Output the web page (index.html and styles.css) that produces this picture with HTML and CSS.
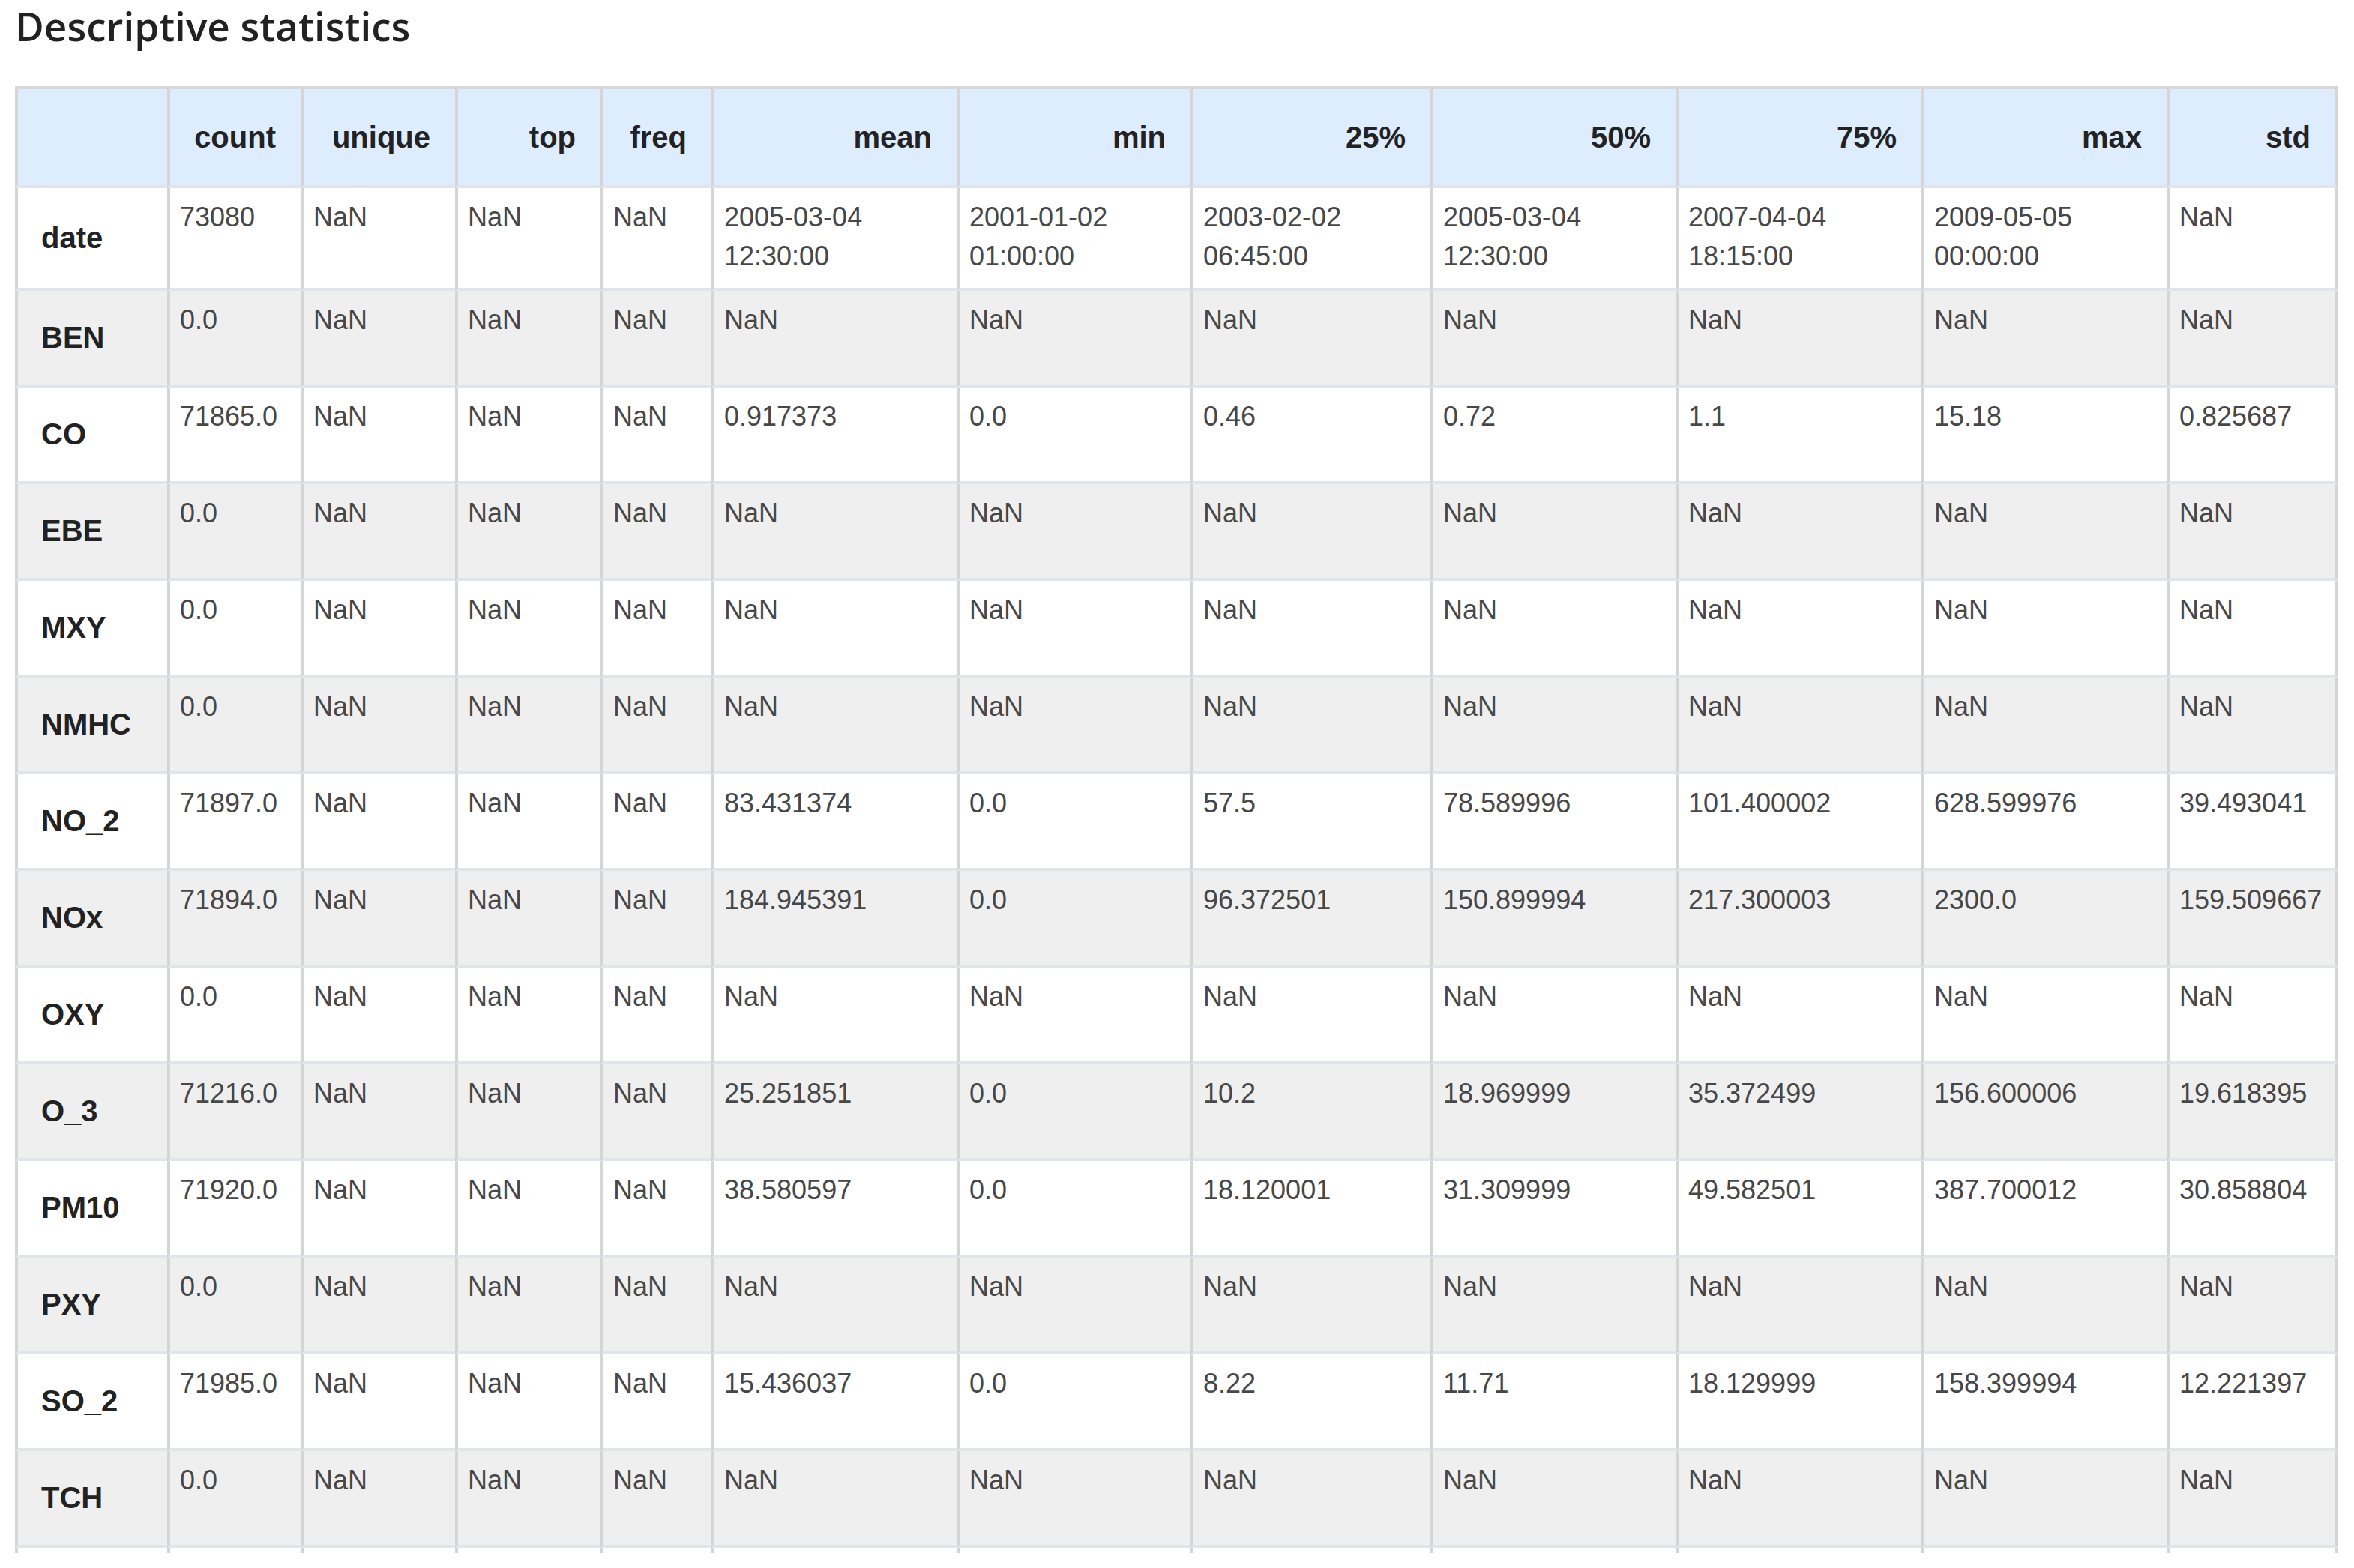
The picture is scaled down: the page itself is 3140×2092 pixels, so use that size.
FILE: index.html
```html
<!DOCTYPE html>
<html lang="en">
<head>
<meta charset="utf-8">
<title>Descriptive statistics</title>
<link rel="stylesheet" href="styles.css">
</head>
<body>
<main class="page">
  <h2 class="title">Descriptive statistics</h2>
  <div class="frame">
    <div class="grid" role="table">
      <div class="row head" role="row">
        <div class="cell corner"></div>
        <div class="cell th">count</div>
        <div class="cell th">unique</div>
        <div class="cell th">top</div>
        <div class="cell th">freq</div>
        <div class="cell th">mean</div>
        <div class="cell th">min</div>
        <div class="cell th">25%</div>
        <div class="cell th">50%</div>
        <div class="cell th">75%</div>
        <div class="cell th">max</div>
        <div class="cell th last">std</div>
      </div>
      <div class="row odd tall" role="row">
        <div class="cell lbl">date</div>
        <div class="cell val">73080</div>
        <div class="cell val">NaN</div>
        <div class="cell val">NaN</div>
        <div class="cell val">NaN</div>
        <div class="cell val">2005-03-04<br>12:30:00</div>
        <div class="cell val">2001-01-02<br>01:00:00</div>
        <div class="cell val">2003-02-02<br>06:45:00</div>
        <div class="cell val">2005-03-04<br>12:30:00</div>
        <div class="cell val">2007-04-04<br>18:15:00</div>
        <div class="cell val">2009-05-05<br>00:00:00</div>
        <div class="cell val last">NaN</div>
      </div>
      <div class="row even" role="row">
        <div class="cell lbl">BEN</div>
        <div class="cell val">0.0</div>
        <div class="cell val">NaN</div>
        <div class="cell val">NaN</div>
        <div class="cell val">NaN</div>
        <div class="cell val">NaN</div>
        <div class="cell val">NaN</div>
        <div class="cell val">NaN</div>
        <div class="cell val">NaN</div>
        <div class="cell val">NaN</div>
        <div class="cell val">NaN</div>
        <div class="cell val last">NaN</div>
      </div>
      <div class="row odd" role="row">
        <div class="cell lbl">CO</div>
        <div class="cell val">71865.0</div>
        <div class="cell val">NaN</div>
        <div class="cell val">NaN</div>
        <div class="cell val">NaN</div>
        <div class="cell val">0.917373</div>
        <div class="cell val">0.0</div>
        <div class="cell val">0.46</div>
        <div class="cell val">0.72</div>
        <div class="cell val">1.1</div>
        <div class="cell val">15.18</div>
        <div class="cell val last">0.825687</div>
      </div>
      <div class="row even" role="row">
        <div class="cell lbl">EBE</div>
        <div class="cell val">0.0</div>
        <div class="cell val">NaN</div>
        <div class="cell val">NaN</div>
        <div class="cell val">NaN</div>
        <div class="cell val">NaN</div>
        <div class="cell val">NaN</div>
        <div class="cell val">NaN</div>
        <div class="cell val">NaN</div>
        <div class="cell val">NaN</div>
        <div class="cell val">NaN</div>
        <div class="cell val last">NaN</div>
      </div>
      <div class="row odd" role="row">
        <div class="cell lbl">MXY</div>
        <div class="cell val">0.0</div>
        <div class="cell val">NaN</div>
        <div class="cell val">NaN</div>
        <div class="cell val">NaN</div>
        <div class="cell val">NaN</div>
        <div class="cell val">NaN</div>
        <div class="cell val">NaN</div>
        <div class="cell val">NaN</div>
        <div class="cell val">NaN</div>
        <div class="cell val">NaN</div>
        <div class="cell val last">NaN</div>
      </div>
      <div class="row even" role="row">
        <div class="cell lbl">NMHC</div>
        <div class="cell val">0.0</div>
        <div class="cell val">NaN</div>
        <div class="cell val">NaN</div>
        <div class="cell val">NaN</div>
        <div class="cell val">NaN</div>
        <div class="cell val">NaN</div>
        <div class="cell val">NaN</div>
        <div class="cell val">NaN</div>
        <div class="cell val">NaN</div>
        <div class="cell val">NaN</div>
        <div class="cell val last">NaN</div>
      </div>
      <div class="row odd" role="row">
        <div class="cell lbl">NO_2</div>
        <div class="cell val">71897.0</div>
        <div class="cell val">NaN</div>
        <div class="cell val">NaN</div>
        <div class="cell val">NaN</div>
        <div class="cell val">83.431374</div>
        <div class="cell val">0.0</div>
        <div class="cell val">57.5</div>
        <div class="cell val">78.589996</div>
        <div class="cell val">101.400002</div>
        <div class="cell val">628.599976</div>
        <div class="cell val last">39.493041</div>
      </div>
      <div class="row even" role="row">
        <div class="cell lbl">NOx</div>
        <div class="cell val">71894.0</div>
        <div class="cell val">NaN</div>
        <div class="cell val">NaN</div>
        <div class="cell val">NaN</div>
        <div class="cell val">184.945391</div>
        <div class="cell val">0.0</div>
        <div class="cell val">96.372501</div>
        <div class="cell val">150.899994</div>
        <div class="cell val">217.300003</div>
        <div class="cell val">2300.0</div>
        <div class="cell val last">159.509667</div>
      </div>
      <div class="row odd" role="row">
        <div class="cell lbl">OXY</div>
        <div class="cell val">0.0</div>
        <div class="cell val">NaN</div>
        <div class="cell val">NaN</div>
        <div class="cell val">NaN</div>
        <div class="cell val">NaN</div>
        <div class="cell val">NaN</div>
        <div class="cell val">NaN</div>
        <div class="cell val">NaN</div>
        <div class="cell val">NaN</div>
        <div class="cell val">NaN</div>
        <div class="cell val last">NaN</div>
      </div>
      <div class="row even" role="row">
        <div class="cell lbl">O_3</div>
        <div class="cell val">71216.0</div>
        <div class="cell val">NaN</div>
        <div class="cell val">NaN</div>
        <div class="cell val">NaN</div>
        <div class="cell val">25.251851</div>
        <div class="cell val">0.0</div>
        <div class="cell val">10.2</div>
        <div class="cell val">18.969999</div>
        <div class="cell val">35.372499</div>
        <div class="cell val">156.600006</div>
        <div class="cell val last">19.618395</div>
      </div>
      <div class="row odd" role="row">
        <div class="cell lbl">PM10</div>
        <div class="cell val">71920.0</div>
        <div class="cell val">NaN</div>
        <div class="cell val">NaN</div>
        <div class="cell val">NaN</div>
        <div class="cell val">38.580597</div>
        <div class="cell val">0.0</div>
        <div class="cell val">18.120001</div>
        <div class="cell val">31.309999</div>
        <div class="cell val">49.582501</div>
        <div class="cell val">387.700012</div>
        <div class="cell val last">30.858804</div>
      </div>
      <div class="row even" role="row">
        <div class="cell lbl">PXY</div>
        <div class="cell val">0.0</div>
        <div class="cell val">NaN</div>
        <div class="cell val">NaN</div>
        <div class="cell val">NaN</div>
        <div class="cell val">NaN</div>
        <div class="cell val">NaN</div>
        <div class="cell val">NaN</div>
        <div class="cell val">NaN</div>
        <div class="cell val">NaN</div>
        <div class="cell val">NaN</div>
        <div class="cell val last">NaN</div>
      </div>
      <div class="row odd" role="row">
        <div class="cell lbl">SO_2</div>
        <div class="cell val">71985.0</div>
        <div class="cell val">NaN</div>
        <div class="cell val">NaN</div>
        <div class="cell val">NaN</div>
        <div class="cell val">15.436037</div>
        <div class="cell val">0.0</div>
        <div class="cell val">8.22</div>
        <div class="cell val">11.71</div>
        <div class="cell val">18.129999</div>
        <div class="cell val">158.399994</div>
        <div class="cell val last">12.221397</div>
      </div>
      <div class="row even" role="row">
        <div class="cell lbl">TCH</div>
        <div class="cell val">0.0</div>
        <div class="cell val">NaN</div>
        <div class="cell val">NaN</div>
        <div class="cell val">NaN</div>
        <div class="cell val">NaN</div>
        <div class="cell val">NaN</div>
        <div class="cell val">NaN</div>
        <div class="cell val">NaN</div>
        <div class="cell val">NaN</div>
        <div class="cell val">NaN</div>
        <div class="cell val last">NaN</div>
      </div>
      <div class="row odd" role="row">
        <div class="cell lbl"></div>
        <div class="cell val"></div>
        <div class="cell val"></div>
        <div class="cell val"></div>
        <div class="cell val"></div>
        <div class="cell val"></div>
        <div class="cell val"></div>
        <div class="cell val"></div>
        <div class="cell val"></div>
        <div class="cell val"></div>
        <div class="cell val"></div>
        <div class="cell val last"></div>
      </div>
    </div>
  </div>
</main>
</body>
</html>
```

FILE: styles.css
```css
html, body {
  margin: 0;
  padding: 0;
  background: #ffffff;
}

.page {
  padding: 0 0 0 20px;
}

.title {
  margin: 0;
  padding-top: 5px;
  font-family: "Open Sans", "Noto Sans", sans-serif;
  font-weight: 600;
  font-size: 53px;
  line-height: 60px;
  color: #222222;
  height: 115px;
  box-sizing: border-box;
}

.frame {
  height: 1957px;
  overflow: hidden;
  width: 3099px;
}

.grid {
  display: grid;
  grid-template-columns: 203px 178px 206px 194px 148px 327px 312px 320px 327px 328px 327px 229px;
  border-top: 4px solid #d8d8d8;
  font-family: "Liberation Sans", Arial, sans-serif;
}

.row {
  display: contents;
}

.cell {
  box-sizing: border-box;
  border-left: 4px solid #d5d5d5;
  border-bottom: 4px solid #e1e4e8;
  height: 129px;
}

.cell.last {
  border-right: 4px solid #d5d5d5;
}

.head .cell {
  height: 132px;
  background: #deedfd;
}

.tall .cell {
  height: 137px;
}

.odd .cell {
  background: #ffffff;
}

.even .cell {
  background: #efefef;
}

.th {
  display: flex;
  align-items: center;
  justify-content: flex-end;
  padding-right: 33px;
  font-weight: 700;
  font-size: 40px;
  color: #222222;
}

.lbl {
  display: flex;
  align-items: center;
  padding-left: 31px;
  font-weight: 700;
  font-size: 40px;
  color: #222222;
}

.val {
  padding: 13px 8px 0 13px;
  font-size: 36px;
  line-height: 52px;
  color: #474747;
  white-space: nowrap;
}
```
